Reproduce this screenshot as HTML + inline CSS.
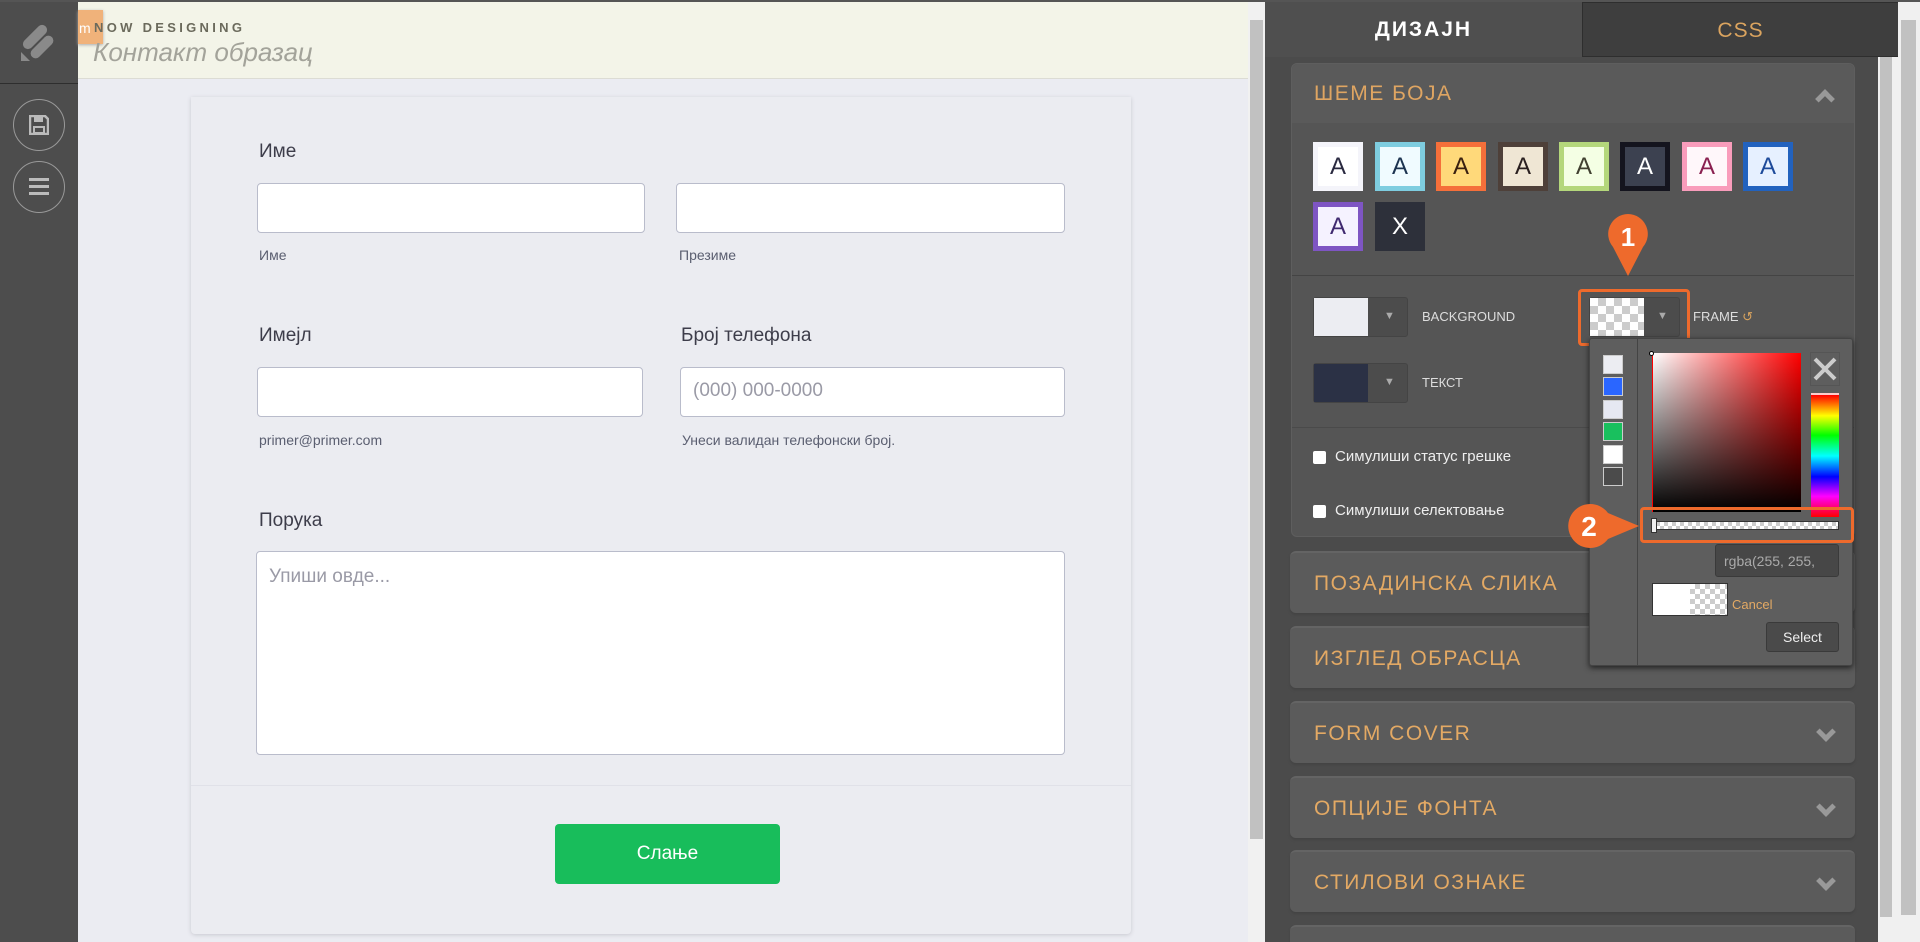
<!DOCTYPE html>
<html><head><meta charset="utf-8"><style>
*{box-sizing:border-box;margin:0;padding:0}
html,body{width:1920px;height:942px;overflow:hidden}
body{background:#4d4d4d;font-family:"Liberation Sans",sans-serif}
#w{position:relative;width:1920px;height:942px;overflow:hidden}
.a{position:absolute}
.lbl{font-size:19px;color:#3d3d4a}
.sub{font-size:14px;color:#5a5e70}
.inp{background:#fff;border:1px solid #b9bccb;border-radius:4px}
.ph{font-size:19px;color:#9a9aa6}
.sec{position:absolute;left:1290px;width:565px;height:62px;background:#5b5b5b;border-radius:6px;border-top:2px solid #646464;box-shadow:0 2px 2px #444}
.sec span{position:absolute;left:24px;top:19px;font-size:21px;letter-spacing:1.5px;color:#e3a964}
.chev{position:absolute;right:22px;top:22px;width:14px;height:14px;border-right:5px solid #999;border-bottom:5px solid #999;transform:rotate(45deg)}
.sw{position:absolute;width:50px;height:49px;font-size:24px;text-align:center;line-height:39px;border:5px solid}
.chk{background-image:linear-gradient(45deg,#ccc 25%,transparent 25%,transparent 75%,#ccc 75%),linear-gradient(45deg,#ccc 25%,#fff 25%,#fff 75%,#ccc 75%);background-size:16px 16px;background-position:0 0,8px 8px}
</style></head><body><div id="w">
<div class="a" style="left:0;top:0;width:1920px;height:2px;background:#555"></div>
<div class="a" style="left:0;top:2px;width:78px;height:940px;background:#4d4d4d"></div>
<div class="a" style="left:0;top:83px;width:78px;height:1px;background:#2e2e2e"></div>
<svg class="a" style="left:18px;top:22px" width="40" height="42" viewBox="0 0 40 42"><g fill="#8a8a8a"><rect x="2" y="10" width="30" height="10" rx="5" transform="rotate(-45 17 15)"/><rect x="10" y="20" width="28" height="10" rx="5" transform="rotate(-45 24 25)"/><path d="M3 30 L12 39 L3 39Z"/></g></svg>
<div class="a" style="left:13px;top:99px;width:52px;height:52px;border:1px solid #999;border-radius:50%"></div>
<svg class="a" style="left:29px;top:115px" width="20" height="20" viewBox="0 0 20 20"><path d="M1 1H16L19 4V19H1Z" fill="none" stroke="#bbb" stroke-width="2.5"/><rect x="5" y="2" width="9" height="5" fill="#bbb"/><rect x="5" y="12" width="10" height="6" fill="none" stroke="#bbb" stroke-width="2"/></svg>
<div class="a" style="left:13px;top:161px;width:52px;height:52px;border:1px solid #999;border-radius:50%"></div>
<div class="a" style="left:29px;top:178px;width:20px;height:3px;background:#bbb;box-shadow:0 7px 0 #bbb,0 14px 0 #bbb"></div>
<div class="a" style="left:78px;top:2px;width:1170px;height:940px;background:#ebecf2"></div>
<div class="a" style="left:78px;top:2px;width:1170px;height:77px;background:#f3f4e8;border-bottom:1px solid #dcdcd4"></div>
<div class="a" style="left:78px;top:10px;width:25px;height:34px;background:#f0b27a;color:#fff;font-size:14px;padding:10px 0 0 1px;box-shadow:0 1px 3px #aaa">m</div>
<div class="a" style="left:94px;top:20px;font-size:13px;font-weight:bold;letter-spacing:3.3px;color:#6b6a5c">NOW DESIGNING</div>
<div class="a" style="left:93px;top:37px;font-size:26px;font-style:italic;color:#a3a39a">Контакт образац</div>
<div class="a" style="left:191px;top:97px;width:940px;height:837px;background:#ebecf1;box-shadow:0 1px 4px #c8c9d0;border-radius:0 0 4px 4px"></div>
<div class="a lbl" style="left:259px;top:141px">Име</div>
<div class="a inp" style="left:257px;top:183px;width:388px;height:50px"></div>
<div class="a inp" style="left:676px;top:183px;width:389px;height:50px"></div>
<div class="a sub" style="left:259px;top:247px">Име</div>
<div class="a sub" style="left:679px;top:247px">Презиме</div>
<div class="a lbl" style="left:259px;top:325px">Имејл</div>
<div class="a lbl" style="left:681px;top:325px">Број телефона</div>
<div class="a inp" style="left:257px;top:367px;width:386px;height:50px"></div>
<div class="a inp" style="left:680px;top:367px;width:385px;height:50px"><div class="ph" style="margin:12px 0 0 12px">(000) 000-0000</div></div>
<div class="a sub" style="left:259px;top:432px">primer@primer.com</div>
<div class="a sub" style="left:682px;top:432px">Унеси валидан телефонски број.</div>
<div class="a lbl" style="left:259px;top:510px">Порука</div>
<div class="a inp" style="left:256px;top:551px;width:809px;height:204px"><div class="ph" style="margin:14px 0 0 12px">Упиши овде...</div></div>
<div class="a" style="left:191px;top:785px;width:940px;height:1px;background:#e0e1e8"></div>
<div class="a" style="left:555px;top:824px;width:225px;height:60px;background:#18bd5b;border-radius:4px;color:#fff;font-size:19px;text-align:center;line-height:60px">Слање</div>
<div class="a" style="left:1248px;top:2px;width:17px;height:940px;background:#f1f1f1"></div>
<div class="a" style="left:1250px;top:20px;width:13px;height:819px;background:#c1c1c1"></div>
<div class="a" style="left:1265px;top:2px;width:613px;height:940px;background:#4b4b4b"></div>
<div class="a" style="left:1265px;top:2px;width:317px;height:55px;background:#4f4f4f;color:#fff;font-size:21px;font-weight:bold;letter-spacing:2px;text-align:center;line-height:55px">ДИЗАЈН</div>
<div class="a" style="left:1582px;top:2px;width:317px;height:55px;background:#3e3e3e;border:1px solid #2e2e2e;color:#dba45f;font-size:21px;letter-spacing:1px;text-align:center;line-height:55px">CSS</div>
<div class="a" style="left:1291px;top:63px;width:564px;height:474px;background:#555;border-radius:6px;border:1px solid #5e5e5e"></div>
<div class="a" style="left:1292px;top:64px;width:562px;height:59px;background:#5a5a5a;border-radius:6px 6px 0 0"></div>
<div class="a" style="left:1314px;top:82px;font-size:21px;letter-spacing:1.5px;color:#dfa562">ШЕМЕ БОЈА</div>
<div class="chev" style="left:1818px;top:92px;transform:rotate(-135deg);right:auto"></div>
<div class="sw" style="left:1313px;top:142px;border-color:#f4f4fa;background:#fff;color:#2a2a40">A</div>
<div class="sw" style="left:1375px;top:142px;border-color:#7ecde0;background:#f0fbff;color:#1c3350">A</div>
<div class="sw" style="left:1436px;top:142px;border-color:#f56f3a;background:#ffd97a;color:#3a2010">A</div>
<div class="sw" style="left:1498px;top:142px;border-color:#4e4039;background:#efe6d4;color:#2a2020">A</div>
<div class="sw" style="left:1559px;top:142px;border-color:#b4d77b;background:#f4ffe4;color:#404030">A</div>
<div class="sw" style="left:1620px;top:142px;border-color:#14141e;background:#3c4150;color:#fff">A</div>
<div class="sw" style="left:1682px;top:142px;border-color:#f99cbb;background:#fff7fa;color:#8a2050">A</div>
<div class="sw" style="left:1743px;top:142px;border-color:#2262be;background:#e6f0ff;color:#1d4a9a">A</div>
<div class="sw" style="left:1313px;top:202px;border-color:#7e55c3;background:#f5f2ff;color:#402a70">A</div>
<div class="sw" style="left:1375px;top:202px;border-color:#2d303a;background:#2d303a;color:#fff">X</div>
<div class="a" style="left:1292px;top:275px;width:562px;height:1px;background:#444"></div>
<div class="a" style="left:1313px;top:297px;width:95px;height:40px;background:#4c4c4c;border:1px solid #444;border-radius:3px"><div style="width:54px;height:38px;background:#ecedf2"></div><div class="a" style="left:70px;top:12px;color:#aaa;font-size:11px">▼</div></div>
<div class="a" style="left:1422px;top:309px;font-size:13px;color:#ddd">BACKGROUND</div>
<div class="a" style="left:1313px;top:363px;width:95px;height:40px;background:#4c4c4c;border:1px solid #444;border-radius:3px"><div style="width:54px;height:38px;background:#2b3145"></div><div class="a" style="left:70px;top:12px;color:#aaa;font-size:11px">▼</div></div>
<div class="a" style="left:1422px;top:375px;font-size:13px;color:#ddd">ТЕКСТ</div>
<div class="a" style="left:1589px;top:297px;width:91px;height:40px;background:#4c4c4c;border:1px solid #444;border-radius:3px"><div class="chk" style="width:54px;height:38px"></div><div class="a" style="left:67px;top:12px;color:#aaa;font-size:11px">▼</div></div>
<div class="a" style="left:1578px;top:289px;width:112px;height:57px;border:3px solid #ee6a2c;border-radius:4px"></div>
<div class="a" style="left:1693px;top:309px;font-size:13px;color:#ddd">FRAME <span style="color:#d9a35e">↺</span></div>
<svg class="a" style="left:1607px;top:213px" width="42" height="64" viewBox="0 0 42 64"><path d="M21 1A20 20 0 0 1 36 34L21 63L6 34A20 20 0 0 1 21 1Z" fill="#ee6a2c"/><text x="21" y="33" font-family="Liberation Sans" font-weight="bold" font-size="26" fill="#fff" text-anchor="middle">1</text></svg>
<div class="a" style="left:1292px;top:427px;width:562px;height:1px;background:#4a4a4a"></div>
<div class="a" style="left:1313px;top:451px;width:13px;height:13px;background:#fff;border-radius:2px"></div>
<div class="a" style="left:1335px;top:448px;font-size:15px;color:#eee">Симулиши статус грешке</div>
<div class="a" style="left:1313px;top:505px;width:13px;height:13px;background:#fff;border-radius:2px"></div>
<div class="a" style="left:1335px;top:502px;font-size:15px;color:#eee">Симулиши селектовање</div>
<div class="sec" style="top:551px"><span>ПОЗАДИНСКА СЛИКА</span></div>
<div class="sec" style="top:626px"><span>ИЗГЛЕД ОБРАСЦА</span></div>
<div class="sec" style="top:701px"><span>FORM COVER</span><div class="chev"></div></div>
<div class="sec" style="top:776px"><span>ОПЦИЈЕ ФОНТА</span><div class="chev"></div></div>
<div class="sec" style="top:850px"><span>СТИЛОВИ ОЗНАКЕ</span><div class="chev"></div></div>
<div class="sec" style="top:925px;height:17px;border-radius:6px 6px 0 0"></div>
<div class="a" style="left:1589px;top:338px;width:264px;height:328px;background:#5e5e5e;border:1px solid #444;border-radius:3px;box-shadow:0 2px 6px #222"></div>
<div class="a" style="left:1637px;top:339px;width:1px;height:326px;background:#444"></div>
<div class="a" style="left:1603px;top:355px;width:20px;height:19px;background:#ecedf2;border:1px solid #ccc"></div>
<div class="a" style="left:1603px;top:377px;width:20px;height:19px;background:#2a66ff;border:1px solid #ccc"></div>
<div class="a" style="left:1603px;top:400px;width:20px;height:19px;background:#e6e8f2;border:1px solid #ccc"></div>
<div class="a" style="left:1603px;top:422px;width:20px;height:19px;background:#19c05e;border:1px solid #ccc"></div>
<div class="a" style="left:1603px;top:445px;width:20px;height:19px;background:#fff;border:1px solid #ccc"></div>
<div class="a" style="left:1603px;top:467px;width:20px;height:19px;background:#4b4b4b;border:1px solid #ccc"></div>
<div class="a" style="left:1652px;top:353px;width:149px;height:159px;background:linear-gradient(to top,#000,transparent),linear-gradient(to right,#fff,#f00);border-left:1px solid #f00"></div>
<div class="a" style="left:1649px;top:351px;width:5px;height:5px;border-radius:50%;background:#fff;border:1px solid #000"></div>
<div class="a" style="left:1810px;top:352px;width:30px;height:34px;border:1px solid #555"></div>
<svg class="a" style="left:1812px;top:356px" width="26" height="26"><path d="M3 3L23 23M23 3L3 23" stroke="#ccc" stroke-width="4"/></svg>
<div class="a" style="left:1811px;top:393px;width:28px;height:124px;border-top:2px solid #fcc;background:linear-gradient(#f00,#ff0 17%,#0f0 33%,#0ff 50%,#00f 67%,#f0f 83%,#f00)"></div>
<div class="a chk" style="left:1651px;top:521px;width:188px;height:9px;background-size:8px 8px;background-position:0 0,4px 4px;border:1px solid #333"></div>
<div class="a" style="left:1651px;top:518px;width:6px;height:15px;background:#eee;border:1px solid #333"></div>
<div class="a" style="left:1640px;top:507px;width:214px;height:36px;border:3px solid #ee6a2c;border-radius:4px"></div>
<svg class="a" style="left:1567px;top:503px" width="74" height="46" viewBox="0 0 74 46"><path d="M23 1A22 22 0 0 1 41 10L72 23L41 36A22 22 0 1 1 23 1Z" fill="#ee6a2c"/><text x="22" y="33" font-family="Liberation Sans" font-weight="bold" font-size="28" fill="#fff" text-anchor="middle">2</text></svg>
<div class="a" style="left:1715px;top:544px;width:124px;height:33px;background:#474747;border-radius:3px;border:1px solid #3a3a3a;color:#aaa;font-size:14px;padding:8px 0 0 8px">rgba(255, 255,</div>
<div class="a" style="left:1652px;top:583px;width:76px;height:33px;border:1px solid #333;background:#fff"><div class="chk" style="margin-left:37px;width:37px;height:31px;background-size:10px 10px;background-position:0 0,5px 5px"></div></div>
<div class="a" style="left:1732px;top:597px;font-size:13px;color:#e3a964">Cancel</div>
<div class="a" style="left:1766px;top:622px;width:73px;height:30px;background:#4a4a4a;border:1px solid #3a3a3a;border-radius:3px;color:#eee;font-size:14px;text-align:center;line-height:28px">Select</div>
<div class="a" style="left:1878px;top:57px;width:20px;height:885px;background:#f0f0f0"></div>
<div class="a" style="left:1880px;top:57px;width:12px;height:860px;background:#c1c1c1"></div>
<div class="a" style="left:1898px;top:2px;width:22px;height:940px;background:#f0f0f0"></div>
<div class="a" style="left:1901px;top:20px;width:15px;height:895px;background:#c1c1c1"></div>
</div></body></html>
